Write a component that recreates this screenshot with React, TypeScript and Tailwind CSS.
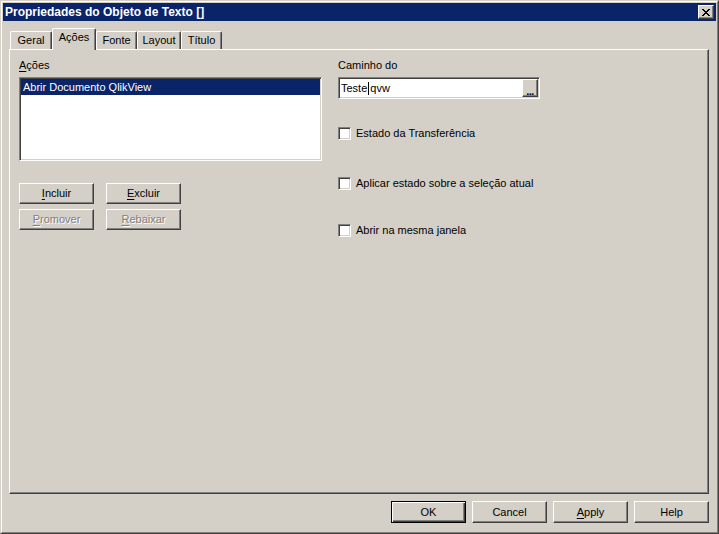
import React from "react";

const raised =
  "border border-t-white border-l-white border-r-[#404040] border-b-[#404040] shadow-[inset_-1px_-1px_0_#808080]";
const sunken =
  "border border-t-[#808080] border-l-[#808080] border-r-white border-b-white shadow-[inset_1px_1px_0_#404040,inset_-1px_-1px_0_#d4d0c8]";

function U({ children }: { children: React.ReactNode }) {
  return <span className="underline decoration-1 underline-offset-[2px]">{children}</span>;
}

function Btn({
  children,
  disabled,
  def,
  w = "w-[75px]",
  h = "h-[22px]",
}: {
  children: React.ReactNode;
  disabled?: boolean;
  def?: boolean;
  w?: string;
  h?: string;
}) {
  const bevel = def
    ? "border border-black shadow-[inset_1px_1px_0_#fff,inset_-1px_-1px_0_#404040,inset_-2px_-2px_0_#808080]"
    : raised;
  return (
    <div
      className={`${w} ${h} ${bevel} bg-[#d4d0c8] flex items-center justify-center ${
        disabled ? "text-[#808080] [text-shadow:1px_1px_0_#fff]" : "text-black"
      }`}
    >
      {children}
    </div>
  );
}

function Check({ label }: { label: string }) {
  return (
    <div className="flex items-center gap-[5px] h-[13px]">
      <div className={`w-[13px] h-[13px] bg-white ${sunken}`} />
      <span className="leading-[13px]">{label}</span>
    </div>
  );
}

function Tab({ label, selected, w }: { label: string; selected?: boolean; w: string }) {
  if (selected) {
    return (
      <div
        className={`${w} h-[22px] -mb-px relative z-10 bg-[#d4d0c8] border-t border-l border-r border-t-white border-l-white border-r-[#404040] rounded-t-[2px] shadow-[inset_-1px_0_0_#808080] flex justify-center pt-[2px]`}
      >
        <span className="leading-[13px]">{label}</span>
      </div>
    );
  }
  return (
    <div
      className={`${w} h-[18px] bg-[#d4d0c8] border-t border-l border-r border-t-white border-l-white border-r-[#404040] rounded-t-[2px] shadow-[inset_-1px_0_0_#808080] flex justify-center pt-[2px]`}
    >
      <span className="leading-[13px]">{label}</span>
    </div>
  );
}

function CloseGlyph() {
  const rows = [
    "11000011",
    "01100110",
    "00111100",
    "00011000",
    "00111100",
    "01100110",
    "11000011",
  ];
  return (
    <svg width="8" height="7" viewBox="0 0 8 7" shapeRendering="crispEdges">
      {rows.map((r, y) =>
        r.split("").map((c, x) =>
          c === "1" ? <rect key={`${x}-${y}`} x={x} y={y} width="1" height="1" fill="#000" /> : null
        )
      )}
    </svg>
  );
}

export default function App() {
  return (
    <div className="w-[719px] h-[534px] bg-[#d4d0c8] text-[11px] text-black [font-family:'Liberation_Sans',Arial,sans-serif] border border-t-[#d4d0c8] border-l-[#d4d0c8] border-r-[#404040] border-b-[#404040] overflow-hidden">
      <div className="w-full h-full border border-t-white border-l-white border-r-[#808080] border-b-[#808080] p-px flex flex-col">
        {/* Title bar */}
        <div className="h-[18px] bg-[#0a246a] flex items-center justify-between pl-[2px] pr-[2px] shrink-0">
          <span className="text-white font-bold text-[12px] leading-[14px]">Propriedades do Objeto de Texto []</span>
          <div className={`w-[16px] h-[14px] ${raised} bg-[#d4d0c8] flex items-center justify-center`}>
            <CloseGlyph />
          </div>
        </div>

        <div className="pl-[6px] pr-[7px] flex flex-col">
          {/* Tabs */}
          <div className="mt-[7px] h-[21px] pl-px flex items-end">
            <Tab label="Geral" w="w-[42px]" />
            <Tab label="Ações" w="w-[44px]" selected />
            <Tab label="Fonte" w="w-[41px]" />
            <Tab label="Layout" w="w-[44px]" />
            <Tab label="Título" w="w-[41px]" />
          </div>

          {/* Panel */}
          <div className="h-[445px] border border-t-white border-l-white border-r-[#404040] border-b-[#404040] shadow-[inset_-1px_-1px_0_#808080] pl-[9px] pt-[9px] flex gap-[16px]">
            {/* Left column */}
            <div className="w-[303px] flex flex-col">
              <div className="leading-[13px]">
                <U>A</U>ções
              </div>
              <div className={`mt-[5px] h-[84px] bg-white ${sunken} p-px`}>
                <div className="h-[16px] bg-[#0a246a] text-white pl-[2px] flex items-center">
                  Abrir Documento QlikView
                </div>
              </div>
              <div className="mt-[22px] flex gap-[12px]">
                <Btn h="h-[21px]">
                  <span>
                    <U>I</U>ncluir
                  </span>
                </Btn>
                <Btn h="h-[21px]">
                  <span>
                    <U>E</U>xcluir
                  </span>
                </Btn>
              </div>
              <div className="mt-[5px] flex gap-[12px]">
                <Btn h="h-[21px]" disabled>
                  <span>
                    <U>P</U>romover
                  </span>
                </Btn>
                <Btn h="h-[21px]" disabled>
                  <span>
                    <U>R</U>ebaixar
                  </span>
                </Btn>
              </div>
            </div>

            {/* Right column */}
            <div className="w-[202px] flex flex-col">
              <div className="leading-[13px]">Caminho do</div>
              <div className={`mt-[5px] h-[22px] bg-white ${sunken} p-px flex`}>
                <div className="flex-1 flex items-center pl-px leading-[13px]">
                  <span>Teste</span>
                  <span className="inline-block w-px h-[13px] bg-black mx-px" />
                  <span>qvw</span>
                </div>
                <div className={`w-[16px] h-full ${raised} bg-[#d4d0c8] flex items-end justify-center`}>
                  <span className="leading-[10px] font-bold tracking-[-0.5px]">...</span>
                </div>
              </div>
              <div className="mt-[28px]">
                <Check label="Estado da Transferência" />
              </div>
              <div className="mt-[37px]">
                <Check label="Aplicar estado sobre a seleção atual" />
              </div>
              <div className="mt-[34px]">
                <Check label="Abrir na mesma janela" />
              </div>
            </div>
          </div>

          {/* Bottom buttons */}
          <div className="mt-[7px] flex justify-end gap-[6px]">
            <Btn def>OK</Btn>
            <Btn>Cancel</Btn>
            <Btn>
              <span>
                <U>A</U>pply
              </span>
            </Btn>
            <Btn>Help</Btn>
          </div>
        </div>
      </div>
    </div>
  );
}
